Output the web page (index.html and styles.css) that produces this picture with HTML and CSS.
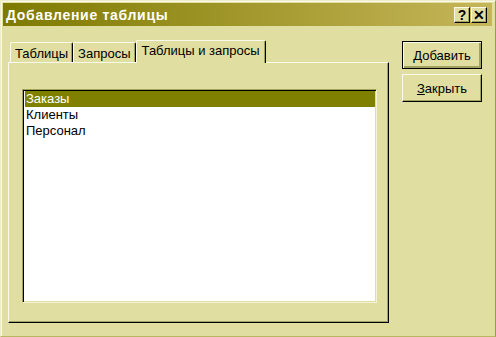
FILE: index.html
```html
<!DOCTYPE html>
<html lang="ru">
<head>
  <meta charset="UTF-8">
  <title>Добавление таблицы</title>
  <link rel="stylesheet" href="styles.css">
</head>
<body>
  <div class="window">
    <div class="titlebar">
      <span class="title">Добавление таблицы</span>
      <div class="title-buttons">
        <button class="tbtn">?</button>
        <button class="tbtn">✕</button>
      </div>
    </div>
    <div class="content">
      <div class="tabs-area">
        <div class="tabs">
          <div class="tab">Таблицы</div>
          <div class="tab">Запросы</div>
          <div class="tab active">Таблицы и запросы</div>
        </div>
        <div class="panel">
          <div class="listbox">
            <div class="item selected">Заказы</div>
            <div class="item">Клиенты</div>
            <div class="item">Персонал</div>
          </div>
        </div>
      </div>
      <div class="actions">
        <button class="btn default"><u>Д</u>обавить</button>
        <button class="btn"><u>З</u>акрыть</button>
      </div>
    </div>
  </div>
</body>
</html>
```

FILE: styles.css
```css
body {
  margin: 0;
  background: #e0dea0;
  font-family: "Liberation Sans", Arial, sans-serif;
  font-size: 13px;
}
.window {
  width: 496px;
  height: 337px;
  box-sizing: border-box;
  padding: 3px;
  background: #e0dea0;
  border-left: 1px solid #eeeccc;
  border-top: 1px solid #eeeccc;
  border-right: 1px solid #9a9850;
  border-bottom: 1px solid #b8b660;
  box-shadow: inset 1px 1px 0 #fafae8;
}
.titlebar {
  height: 23px;
  margin-top: -1px;
  margin-left: -1px;
  display: flex;
  align-items: center;
  justify-content: space-between;
  padding: 0 5px 0 3px;
  background: linear-gradient(to right, #7e7a00, #c6b65a);
}
.title {
  color: #fff;
  font-weight: bold;
  font-size: 14px;
  letter-spacing: 0.7px;
}
.title-buttons {
  display: flex;
  gap: 1px;
}
.tbtn {
  width: 16px;
  height: 16px;
  padding: 0;
  margin: 0;
  font-family: "Liberation Sans", Arial, sans-serif;
  font-weight: bold;
  font-size: 14px;
  line-height: 12px;
  color: #000;
  background: #e0dea0;
  border: 1px solid;
  border-color: #fafae8 #000 #000 #fafae8;
  box-shadow: inset -1px -1px 0 #a4a260;
}
.content {
  display: flex;
  padding: 13px 0 0 4px;
}
.tabs-area {
  width: 381px;
}
.tabs {
  display: flex;
  align-items: flex-end;
  height: 23px;
  padding-left: 2px;
  position: relative;
  z-index: 1;
}
.tab {
  height: 19px;
  padding: 0 4px;
  line-height: 21px;
  border-left: 1px solid #fafae8;
  border-top: 1px solid #fafae8;
  border-right: 1px solid #000;
  box-shadow: inset -1px 0 0 #a4a260;
  border-radius: 2px 2px 0 0;
  background: #e0dea0;
}
.tab.active {
  height: 22px;
  line-height: 19px;
  padding: 0 5px;
  margin-bottom: -1px;
}
.panel {
  height: 261px;
  box-sizing: border-box;
  padding: 26px 11px 0 13px;
  border-left: 1px solid #fafae8;
  border-top: 1px solid #fafae8;
  border-right: 1px solid #000;
  border-bottom: 1px solid #000;
  box-shadow: inset -1px -1px 0 #a4a260;
}
.listbox {
  height: 211px;
  background: #fff;
  border: 1px solid;
  border-color: #a4a260 #f4f2d8 #f4f2d8 #a4a260;
  box-shadow: inset 1px 1px 0 #000, inset -1px -1px 0 #e0dea0;
  padding: 1px 1px 0 2px;
}
.item {
  height: 16px;
  line-height: 16px;
  padding-left: 1px;
  color: #000;
}
.item.selected {
  background: #808000;
  color: #fff;
}
.actions {
  display: flex;
  flex-direction: column;
  gap: 5px;
  margin-left: 13px;
  padding-top: 2px;
}
.btn {
  width: 80px;
  height: 28px;
  padding: 0;
  margin: 0;
  font-family: "Liberation Sans", Arial, sans-serif;
  font-size: 13px;
  color: #000;
  background: #e0dea0;
  border: 1px solid;
  border-color: #fafae8 #000 #000 #fafae8;
  box-shadow: inset -1px -1px 0 #a4a260;
}
.btn.default {
  border: 1px solid #000;
  box-shadow: inset 1px 1px 0 #fafae8, inset -2px -2px 0 #a4a260, inset -1px -1px 0 #000;
}
.btn u {
  text-decoration: underline;
}
```
